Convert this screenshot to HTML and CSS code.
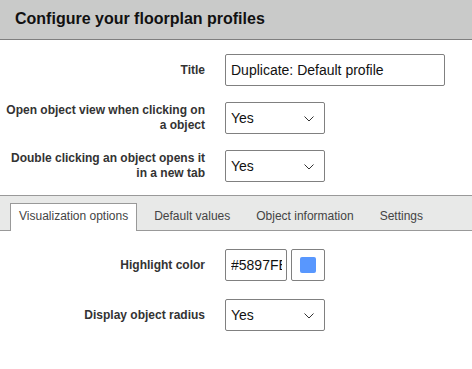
FILE: index.html
```html
<!DOCTYPE html>
<html lang="en">
<head>
    <meta charset="UTF-8">
    <meta name="viewport" content="width=device-width, initial-scale=1.0">
    <title>Floorplan profiles</title>
    <link rel="stylesheet" href="styles.css">
</head>
<body>
    <div class="header">Configure your floorplan profiles</div>

    <form class="profile-form">
        <div class="form-row">
            <label for="title">Title</label>
            <input type="text" id="title" class="text-input wide" value="Duplicate: Default profile">
        </div>

        <div class="form-row">
            <label for="openView">Open object view when clicking on a object</label>
            <div class="select-wrap">
                <select id="openView">
                    <option>Yes</option>
                    <option>No</option>
                </select>
                <svg class="chevron" width="10" height="6" viewBox="0 0 10 6"><path d="M0.5 0.5 L5 5 L9.5 0.5" fill="none" stroke="#333" stroke-width="1"/></svg>
            </div>
        </div>

        <div class="form-row">
            <label for="newTab">Double clicking an object opens it in a new tab</label>
            <div class="select-wrap">
                <select id="newTab">
                    <option>Yes</option>
                    <option>No</option>
                </select>
                <svg class="chevron" width="10" height="6" viewBox="0 0 10 6"><path d="M0.5 0.5 L5 5 L9.5 0.5" fill="none" stroke="#333" stroke-width="1"/></svg>
            </div>
        </div>
    </form>

    <div class="tabs">
        <div class="tab active">Visualization options</div>
        <div class="tab">Default values</div>
        <div class="tab">Object information</div>
        <div class="tab">Settings</div>
    </div>

    <form class="profile-form tab-content">
        <div class="form-row">
            <label for="highlight">Highlight color</label>
            <input type="text" id="highlight" class="text-input color-text" value="#5897FE">
            <button type="button" class="swatch-btn"><span class="swatch"></span></button>
        </div>

        <div class="form-row">
            <label for="radius">Display object radius</label>
            <div class="select-wrap">
                <select id="radius">
                    <option>Yes</option>
                    <option>No</option>
                </select>
                <svg class="chevron" width="10" height="6" viewBox="0 0 10 6"><path d="M0.5 0.5 L5 5 L9.5 0.5" fill="none" stroke="#333" stroke-width="1"/></svg>
            </div>
        </div>
    </form>
</body>
</html>
```

FILE: styles.css
```css
body {
    margin: 0;
    font-family: "Liberation Sans", Arial, sans-serif;
    background: #fff;
    color: #222;
}

.header {
    height: 39px;
    line-height: 38px;
    padding: 0 15px;
    background-color: #c9cac9;
    border-bottom: 1px solid #7f7f7f;
    font-size: 16px;
    font-weight: bold;
    color: #111;
}

.profile-form {
    padding: 14px 0 13px;
    display: flex;
    flex-direction: column;
    gap: 16px;
}

.form-row {
    display: flex;
    align-items: center;
    gap: 4px;
}

.form-row label {
    width: 205px;
    margin-right: 16px;
    text-align: right;
    font-size: 12px;
    font-weight: bold;
    line-height: 15px;
    color: #333;
}

.text-input {
    box-sizing: border-box;
    height: 32px;
    padding: 0 4px 0 5px;
    border: 1px solid #808080;
    border-radius: 2px;
    font-family: inherit;
    font-size: 14px;
    color: #111;
}

.wide {
    width: 220px;
}

.color-text {
    width: 62px;
}

.select-wrap {
    position: relative;
    width: 100px;
    height: 32px;
}

.select-wrap select {
    appearance: none;
    -webkit-appearance: none;
    box-sizing: border-box;
    width: 100%;
    height: 32px;
    padding: 0 5px;
    border: 1px solid #808080;
    border-radius: 2px;
    background: #fff;
    font-family: inherit;
    font-size: 14px;
    color: #111;
}

.chevron {
    position: absolute;
    right: 11px;
    top: 14px;
    pointer-events: none;
}

.tabs {
    display: flex;
    align-items: flex-end;
    height: 34px;
    padding: 0 10px;
    background-color: #e8e9e8;
    border-top: 1px solid #999;
    border-bottom: 1px solid #999;
}

.tab {
    height: 26px;
    line-height: 25px;
    padding: 0 8px;
    margin-right: 8px;
    font-size: 12px;
    color: #444;
    border: 1px solid transparent;
    border-bottom: none;
}

.tab.active {
    background: #fff;
    border-color: #999;
    height: 27px;
    margin-bottom: -1px;
}

.tab-content {
    padding-top: 18px;
    gap: 18px;
}

.swatch-btn {
    box-sizing: border-box;
    width: 34px;
    height: 32px;
    padding: 0;
    border: 1px solid #808080;
    border-radius: 2px;
    background: #fff;
    display: flex;
    align-items: center;
    justify-content: center;
}

.swatch {
    display: block;
    width: 16px;
    height: 16px;
    border-radius: 2px;
    background-color: #5897fe;
}
```
